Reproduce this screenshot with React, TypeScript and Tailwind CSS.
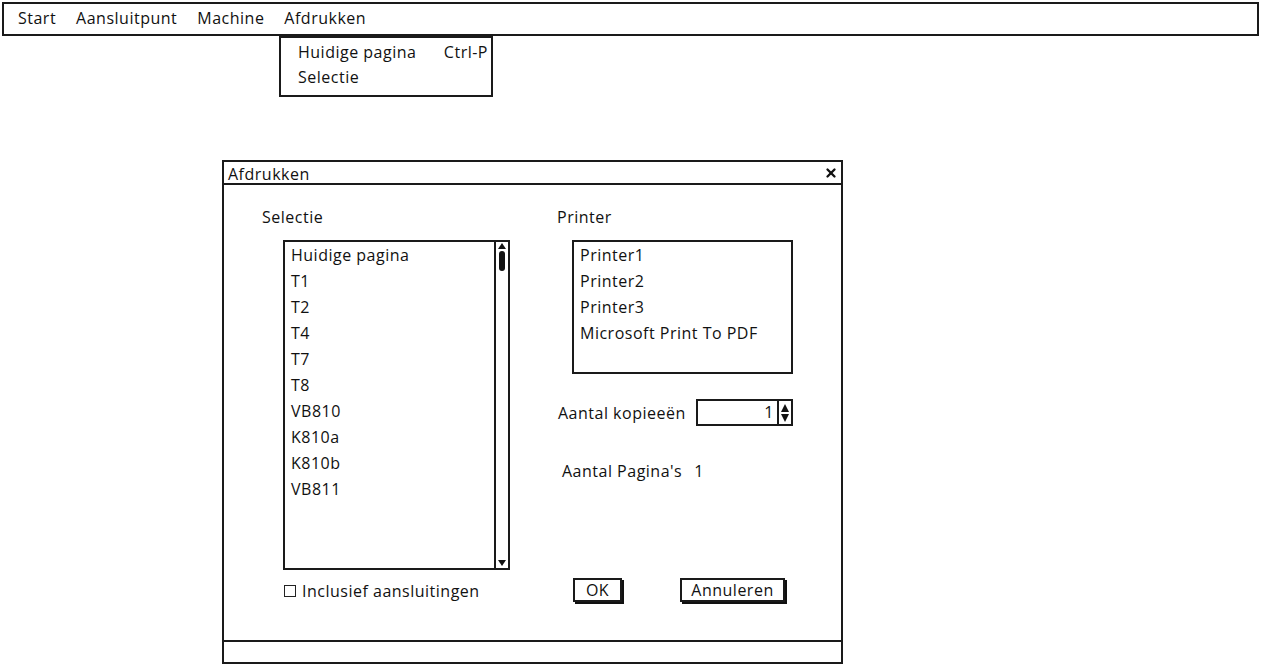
import { X } from "lucide-react";

const selectie = ["Huidige pagina", "T1", "T2", "T4", "T7", "T8", "VB810", "K810a", "K810b", "VB811"];
const printers = ["Printer1", "Printer2", "Printer3", "Microsoft Print To PDF"];
const menus = ["Start", "Aansluitpunt", "Machine", "Afdrukken"];

const font = { fontFamily: '"Open Sans", "DejaVu Sans", sans-serif' };

export default function App() {
	return (
		<div className="relative w-[1261px] h-[665px] bg-white text-[#111] overflow-hidden text-[16px] tracking-[0.5px]" style={font}>
			<div className="mx-[2px] mt-[2px] h-[34px] border-2 border-[#1a1a1a] flex items-center pl-[14px] gap-[20px] pb-[3px]">
				{menus.map((m) => (
					<span key={m}>{m}</span>
				))}
			</div>

			<div className="absolute left-[279px] top-[36px] w-[214px] h-[61px] border-2 border-[#1a1a1a] bg-white pl-[17px] pt-[1px]">
				<div className="flex justify-between pr-[3px] h-[26px] items-center">
					<span>Huidige pagina</span>
					<span>Ctrl-P</span>
				</div>
				<div className="h-[24px] flex items-center">Selectie</div>
			</div>

			<div className="ml-[222px] mt-[124px] w-[621px] h-[504px] border-2 border-[#1a1a1a] flex flex-col">
				<div className="h-[23px] border-b-2 border-[#1a1a1a] flex items-center justify-between pl-[4px] pr-[3px]">
					<span className="mt-[2px]">Afdrukken</span>
					<X size={14} strokeWidth={4} />
				</div>
				<div className="flex-1 flex">
					<div className="w-[333px] pl-[38px] pt-[20px]">
						<div className="h-[22px]">Selectie</div>
						<div className="ml-[21px] mt-[13px] w-[227px] h-[330px] border-2 border-[#1a1a1a] flex">
							<div className="flex-1 pl-[6px]">
								{selectie.map((s) => (
									<div key={s} className="h-[26px] flex items-center">{s}</div>
								))}
							</div>
							<div className="w-[14px] border-l-2 border-[#1a1a1a] flex flex-col items-center justify-between py-[1px]">
								<div className="flex flex-col items-center">
									<div className="w-0 h-0 border-l-[4px] border-r-[4px] border-b-[6px] border-l-transparent border-r-transparent border-b-[#111]" />
									<div className="w-[6px] h-[20px] mt-[2px] bg-[#111] rounded-sm" />
								</div>
								<div className="w-0 h-0 border-l-[4px] border-r-[4px] border-t-[6px] border-l-transparent border-r-transparent border-t-[#111] mb-[1px]" />
							</div>
						</div>
						<div className="ml-[22px] mt-[9px] flex items-center gap-[6px]">
							<div className="w-[12px] h-[12px] border border-[#222]" />
							<span>Inclusief aansluitingen</span>
						</div>
					</div>
					<div className="flex-1 pt-[20px]">
						<div className="h-[22px]">Printer</div>
						<div className="ml-[15px] mt-[13px] w-[221px] h-[134px] border-2 border-[#1a1a1a] pl-[6px]">
							{printers.map((p) => (
								<div key={p} className="h-[26px] flex items-center">{p}</div>
							))}
						</div>
						<div className="mt-[25px] flex items-center">
							<span className="w-[139px] pl-[1px]">Aantal kopieeën</span>
							<div className="w-[97px] h-[27px] border-2 border-[#1a1a1a] flex">
								<div className="flex-1 text-right pr-[3px] leading-[23px]">1</div>
								<div className="w-[14px] border-l-2 border-[#1a1a1a] flex flex-col items-center justify-center gap-[2px]">
									<div className="w-0 h-0 border-l-[4px] border-r-[4px] border-b-[8px] border-l-transparent border-r-transparent border-b-[#111]" />
									<div className="w-0 h-0 border-l-[4px] border-r-[4px] border-t-[8px] border-l-transparent border-r-transparent border-t-[#111]" />
								</div>
							</div>
						</div>
						<div className="mt-[33px] pl-[5px] flex gap-[12px]">
							<span>Aantal Pagina's</span>
							<span>1</span>
						</div>
						<div className="mt-[95px] flex items-center pl-[16px]">
							<div className="w-[49px] h-[24px] border-2 border-[#1a1a1a] shadow-[2px_2px_0_#111] flex items-center justify-center">OK</div>
							<div className="ml-[58px] w-[105px] h-[24px] border-2 border-[#1a1a1a] shadow-[2px_2px_0_#111] flex items-center justify-center">Annuleren</div>
						</div>
					</div>
				</div>
				<div className="h-[22px] border-t-2 border-[#1a1a1a]" />
			</div>
		</div>
	);
}
